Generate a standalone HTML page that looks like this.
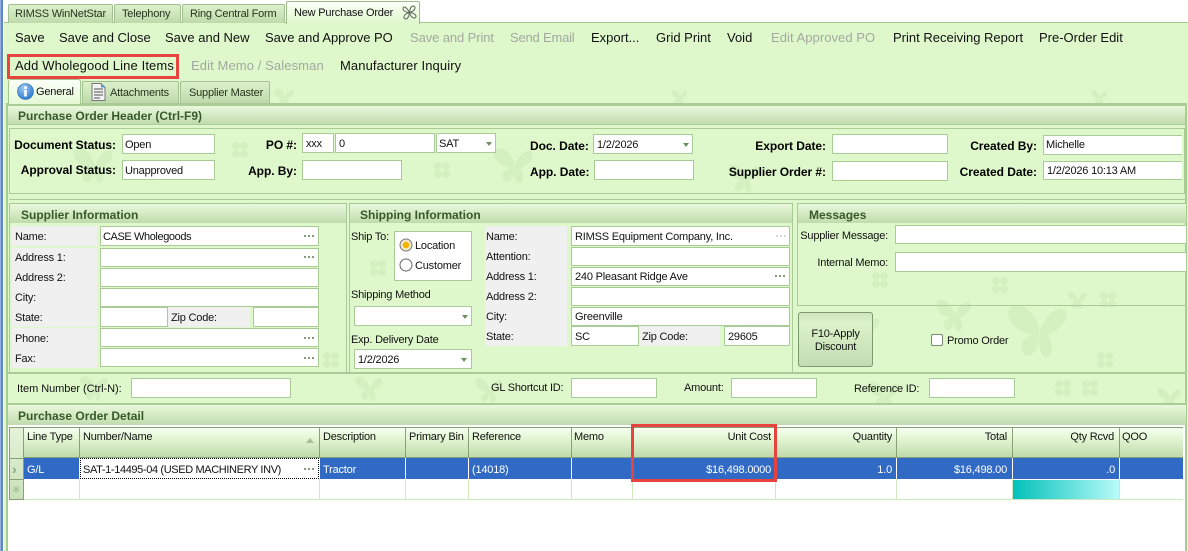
<!DOCTYPE html>
<html><head><meta charset="utf-8"><title>New Purchase Order</title>
<style>
html,body{margin:0;padding:0}
body{width:1188px;height:551px;position:relative;overflow:hidden;background:#fff;font-family:"Liberation Sans",sans-serif;font-size:11px;color:#000}
div,span{position:absolute;box-sizing:border-box}
.t{line-height:16px;height:16px;white-space:nowrap;letter-spacing:-.2px;color:#111;margin-top:1px}
.b{font-weight:bold;letter-spacing:-.05px;color:#000;font-size:12px}
.r{text-align:right}
.m{font-size:13px;letter-spacing:0;color:#111}
.d{color:#a3a8a0}
.i{background:#fff;border:1px solid #a9cb96}
.g{background:#f0f0f0}
.h{background:linear-gradient(#e9f9dc,#c0dbac);border:1px solid #aacd95}
.ht{font-weight:bold;color:#37592c;letter-spacing:0;font-size:12px}
.tab{background:linear-gradient(#dcf1cb,#bfd9ab);border:1px solid #a3c190;border-bottom:0;border-radius:2px 2px 0 0}
.dots{width:12px;height:2px;background:radial-gradient(circle at 1px 1px,#5d7751 1px,transparent 1px) 0 0/4px 2px}
.ar{width:0;height:0;border:3px solid transparent;border-top:4px solid #6f8f62;border-bottom:0}
.c{border-right:1px solid #87a078;height:31px;top:427px}
.v{border-right:1px solid #cde8bd;height:21px;top:479px}
.w{border-right:1px solid #fff;height:21px;top:458px}
.rt{top:461px;color:#fff}
svg{position:absolute;left:0;top:0}
</style></head><body>

<!-- outer chrome -->
<div style="left:0;top:0;width:4px;height:551px;background:linear-gradient(90deg,#b5c9ea 0,#5b83c9 35%,#5b83c9 70%,#fff 75%)"></div>
<div style="left:4px;top:22px;width:1184px;height:529px;background:#dff8cb;border-top:1px solid #a3c690"></div>

<!-- background motifs -->
<svg width="1188" height="551" viewBox="0 0 1188 551">
<defs>
<g id="bf"><path d="M0 0C-4-14-14-20-20-15C-24-9-17 1-5 3C-13 5-15 14-9 17C-3 18 0 9 0 0C3-9 11-16 16-14C21-10 15 0 5 3C9 8 9 16 5 18C0 19-2 8 0 0Z"/></g>
<g id="fl"><circle cx="-4" cy="-4" r="4"/><circle cx="4" cy="-4" r="4"/><circle cx="-4" cy="4" r="4"/><circle cx="4" cy="4" r="4"/></g>
</defs>
<g fill="#d4f0c0">
<use href="#bf" transform="translate(95,165)"/><use href="#bf" transform="translate(515,165)"/>
<use href="#bf" transform="translate(745,178) scale(.8)"/>
<use href="#bf" transform="translate(1040,330) scale(1.5)"/><use href="#bf" transform="translate(955,315) scale(.9)"/>
<use href="#bf" transform="translate(865,330) scale(.8)"/><use href="#bf" transform="translate(370,388) scale(.7)"/>
<use href="#bf" transform="translate(95,388) scale(.7)"/><use href="#bf" transform="translate(490,390) scale(.7)"/>
<use href="#bf" transform="translate(885,395) scale(.8)"/><use href="#bf" transform="translate(1170,398) scale(.6)"/>
<use href="#bf" transform="translate(285,97) scale(.5)"/><use href="#bf" transform="translate(680,97) scale(.4)"/>
<use href="#bf" transform="translate(1100,97) scale(.4)"/><use href="#bf" transform="translate(1078,300) scale(.5)"/>
<use href="#fl" transform="translate(240,150)"/><use href="#fl" transform="translate(442,170)"/>
<use href="#fl" transform="translate(378,268)"/><use href="#fl" transform="translate(331,360)"/>
<use href="#fl" transform="translate(1105,360)"/><use href="#fl" transform="translate(1090,388)"/>
<use href="#fl" transform="translate(1063,388)"/><use href="#fl" transform="translate(1108,300)"/>
<use href="#fl" transform="translate(1000,285)"/><use href="#fl" transform="translate(880,280)"/>
</g>
</svg>

<!-- top tabs -->
<div class="tab" style="left:8px;top:4px;width:105px;height:19px"></div><div class="t" style="left:15px;top:5px;color:#24361d">RIMSS WinNetStar</div>
<div class="tab" style="left:114px;top:4px;width:67px;height:19px"></div><div class="t" style="left:122px;top:5px;color:#24361d">Telephony</div>
<div class="tab" style="left:182px;top:4px;width:103px;height:19px"></div><div class="t" style="left:190px;top:5px;color:#24361d">Ring Central Form</div>
<div style="left:286px;top:1px;width:134px;height:23px;background:linear-gradient(#fbfff7,#dff8cb);border:1px solid #9dbb8a;border-bottom:0;border-radius:2px 2px 0 0"></div>
<div class="t" style="left:294px;top:4px">New Purchase Order</div>
<svg style="left:402px;top:5px" width="15" height="15" viewBox="0 0 15 15"><path d="M7.5 7.5C4 1 1 1 1 3.5S3 7 7.5 7.5C1 9 1 14 3.5 14S7 11 7.5 7.5C9 14 14 14 14 11.5S11 8 7.5 7.5C14 6 14 1 11.5 1S8 3 7.5 7.5Z" fill="#eef5e8" stroke="#5c6b58" stroke-width="1"/></svg>

<!-- toolbar -->
<div class="t m" style="left:15px;top:29px">Save</div>
<div class="t m" style="left:59px;top:29px">Save and Close</div>
<div class="t m" style="left:165px;top:29px">Save and New</div>
<div class="t m" style="left:265px;top:29px;letter-spacing:-.05px">Save and Approve PO</div>
<div class="t m d" style="left:410px;top:29px;letter-spacing:-.1px">Save and Print</div>
<div class="t m d" style="left:510px;top:29px;letter-spacing:-.2px">Send Email</div>
<div class="t m" style="left:591px;top:29px">Export...</div>
<div class="t m" style="left:656px;top:29px">Grid Print</div>
<div class="t m" style="left:727px;top:29px">Void</div>
<div class="t m d" style="left:771px;top:29px;letter-spacing:.05px">Edit Approved PO</div>
<div class="t m" style="left:893px;top:29px">Print Receiving Report</div>
<div class="t m" style="left:1039px;top:29px">Pre-Order Edit</div>
<div class="t m" style="left:15px;top:57px;letter-spacing:.12px">Add Wholegood Line Items</div>
<div class="t m d" style="left:191px;top:57px;letter-spacing:.1px">Edit Memo / Salesman</div>
<div class="t m" style="left:340px;top:57px;letter-spacing:.1px">Manufacturer Inquiry</div>
<div style="left:7px;top:54px;width:172px;height:25px;border:3px solid #e8433f"></div>

<!-- sub tabs -->
<div style="left:6px;top:103px;width:1181px;height:448px;border:2px solid #a9cb96;border-bottom:0;background:transparent"></div>
<div style="left:8px;top:79px;width:73px;height:25px;background:linear-gradient(#fbfff7,#e6f9d6);border:1px solid #a3c690;border-bottom:0;border-radius:3px 3px 0 0"></div>
<div class="tab" style="left:82px;top:81px;width:97px;height:22px"></div>
<div class="tab" style="left:180px;top:81px;width:90px;height:22px"></div>
<svg style="left:17px;top:83px" width="17" height="17" viewBox="0 0 17 17"><defs><radialGradient id="ib" cx=".4" cy=".3" r=".8"><stop offset="0" stop-color="#9ccbf5"/><stop offset="1" stop-color="#1f6fc9"/></radialGradient></defs><circle cx="8.5" cy="8.5" r="8" fill="url(#ib)" stroke="#2a6cb5" stroke-width=".6"/><rect x="7.2" y="7" width="2.6" height="6.5" fill="#fff"/><circle cx="8.5" cy="4.6" r="1.5" fill="#fff"/></svg>
<div class="t" style="left:36px;top:83px">General</div>
<svg style="left:91px;top:83px" width="15" height="18" viewBox="0 0 15 18"><path d="M1 .5H10L14 4.5V17.500H1Z" fill="#f2f2f2" stroke="#777" stroke-width="1"/><path d="M10 .5V4.500H14Z" fill="#4f9ad8"/><path d="M3 6H12M3 9H12M3 12H12M3 15H9" stroke="#888" stroke-width="1.400"/></svg>
<div class="t" style="left:110px;top:84px;color:#24361d">Attachments</div>
<div class="t" style="left:189px;top:84px;color:#24361d">Supplier Master</div>

<!-- PO header -->
<div class="h" style="left:7px;top:105px;width:1179px;height:20px"></div>
<div class="t ht" style="left:18px;top:107px">Purchase Order Header (Ctrl-F9)</div>
<div style="left:9px;top:128px;width:1176px;height:66px;border:1px solid #a9cb96"></div>
<div style="left:9px;top:199px;width:1176px;height:1px;background:#a9cb96"></div>

<div class="t b r" style="left:0;top:136px;width:116px">Document Status:</div>
<div class="i" style="left:122px;top:134px;width:93px;height:20px"></div><div class="t" style="left:125px;top:136px">Open</div>
<div class="t b r" style="left:0;top:161px;width:116px">Approval Status:</div>
<div class="i" style="left:122px;top:160px;width:93px;height:20px"></div><div class="t" style="left:125px;top:162px">Unapproved</div>
<div class="t b r" style="left:200px;top:136px;width:97px">PO #:</div>
<div class="i" style="left:302px;top:133px;width:32px;height:20px"></div><div class="t" style="left:306px;top:135px">xxx</div>
<div class="i" style="left:335px;top:133px;width:100px;height:20px"></div><div class="t" style="left:339px;top:135px">0</div>
<div class="i" style="left:436px;top:133px;width:60px;height:20px"></div><div class="t" style="left:439px;top:135px">SAT</div><div class="ar" style="left:486px;top:142px"></div>
<div class="t b r" style="left:200px;top:162px;width:97px">App. By:</div>
<div class="i" style="left:302px;top:160px;width:100px;height:20px"></div>
<div class="t b" style="left:530px;top:137px">Doc. Date:</div>
<div class="i" style="left:593px;top:134px;width:100px;height:20px"></div><div class="t" style="left:597px;top:136px">1/2/2026</div><div class="ar" style="left:683px;top:143px"></div>
<div class="t b" style="left:530px;top:163px">App. Date:</div>
<div class="i" style="left:594px;top:160px;width:100px;height:20px"></div>
<div class="t b r" style="left:700px;top:137px;width:126px">Export Date:</div>
<div class="i" style="left:832px;top:134px;width:116px;height:20px"></div>
<div class="t b r" style="left:700px;top:163px;width:126px">Supplier Order #:</div>
<div class="i" style="left:832px;top:161px;width:116px;height:20px"></div>
<div class="t b r" style="left:950px;top:137px;width:87px">Created By:</div>
<div class="i" style="left:1043px;top:135px;width:139px;height:20px;border-right:0"></div><div class="t" style="left:1046px;top:136px">Michelle</div>
<div class="t b r" style="left:950px;top:163px;width:87px">Created Date:</div>
<div class="i" style="left:1043px;top:161px;width:139px;height:19px;border-right:0"></div><div class="t" style="left:1047px;top:162px">1/2/2026 10:13 AM</div>

<!-- supplier -->
<div style="left:9px;top:203px;width:338px;height:170px;border:1px solid #a9cb96"></div>
<div class="h" style="left:10px;top:204px;width:336px;height:19px;border:0"></div>
<div class="t ht" style="left:21px;top:206px">Supplier Information</div>
<div class="g" style="left:12px;top:226px;width:85px;height:142px"></div>
<div class="g" style="left:168px;top:307px;width:82px;height:20px"></div>
<div style="left:12px;top:246px;width:85px;height:2px;background:#dff8cb"></div>
<div style="left:12px;top:327px;width:85px;height:1px;background:#dff8cb"></div>
<div class="t" style="left:15px;top:228px">Name:</div><div class="i" style="left:100px;top:226px;width:219px;height:20px"></div><div class="t" style="left:103px;top:228px;letter-spacing:-.4px">CASE Wholegoods</div><div class="dots" style="left:304px;top:235px"></div>
<div class="t" style="left:15px;top:249px">Address 1:</div><div class="i" style="left:100px;top:248px;width:219px;height:19px"></div><div class="dots" style="left:304px;top:256px"></div>
<div class="t" style="left:15px;top:269px">Address 2:</div><div class="i" style="left:100px;top:268px;width:219px;height:19px"></div>
<div class="t" style="left:15px;top:289px">City:</div><div class="i" style="left:100px;top:288px;width:219px;height:19px"></div>
<div class="t" style="left:15px;top:309px">State:</div><div class="i" style="left:100px;top:307px;width:68px;height:20px"></div>
<div class="t" style="left:171px;top:309px">Zip Code:</div><div class="i" style="left:253px;top:307px;width:66px;height:20px"></div>
<div class="t" style="left:15px;top:330px">Phone:</div><div class="i" style="left:100px;top:328px;width:219px;height:19px"></div><div class="dots" style="left:304px;top:337px"></div>
<div class="t" style="left:15px;top:350px">Fax:</div><div class="i" style="left:100px;top:348px;width:219px;height:19px"></div><div class="dots" style="left:304px;top:357px"></div>

<!-- shipping -->
<div style="left:349px;top:203px;width:444px;height:170px;border:1px solid #a9cb96"></div>
<div class="h" style="left:350px;top:204px;width:442px;height:19px;border:0"></div>
<div class="t ht" style="left:360px;top:206px">Shipping Information</div>
<div class="t" style="left:351px;top:228px">Ship To:</div>
<div class="i" style="left:394px;top:231px;width:78px;height:50px"></div>
<svg style="left:399px;top:238px" width="14" height="14" viewBox="0 0 14 14"><circle cx="7" cy="7" r="6" fill="#f4e8c8" stroke="#777"/><circle cx="7" cy="7" r="3.200" fill="#f5b300"/></svg>
<svg style="left:399px;top:258px" width="14" height="14" viewBox="0 0 14 14"><circle cx="7" cy="7" r="6" fill="#fff" stroke="#666"/></svg>
<div class="t" style="left:415px;top:237px">Location</div>
<div class="t" style="left:415px;top:257px">Customer</div>
<div class="t" style="left:351px;top:286px">Shipping Method</div>
<div class="i" style="left:354px;top:306px;width:118px;height:20px"></div><div class="ar" style="left:462px;top:315px"></div>
<div class="t" style="left:351px;top:331px">Exp. Delivery Date</div>
<div class="i" style="left:354px;top:349px;width:118px;height:20px"></div><div class="t" style="left:358px;top:351px">1/2/2026</div><div class="ar" style="left:461px;top:358px"></div>
<div class="g" style="left:485px;top:226px;width:82px;height:120px"></div>
<div class="g" style="left:639px;top:326px;width:81px;height:20px"></div>
<div class="t" style="left:486px;top:228px">Name:</div><div class="i" style="left:571px;top:226px;width:219px;height:20px"></div><div class="t" style="left:575px;top:228px">RIMSS Equipment Company, Inc.</div><div class="dots" style="left:776px;top:235px;opacity:.35"></div>
<div class="t" style="left:486px;top:248px">Attention:</div><div class="i" style="left:571px;top:247px;width:219px;height:19px"></div>
<div class="t" style="left:486px;top:268px">Address 1:</div><div class="i" style="left:571px;top:267px;width:219px;height:19px"></div><div class="t" style="left:575px;top:268px">240 Pleasant Ridge Ave</div><div class="dots" style="left:775px;top:275px"></div>
<div class="t" style="left:486px;top:288px">Address 2:</div><div class="i" style="left:571px;top:287px;width:219px;height:19px"></div>
<div class="t" style="left:486px;top:308px">City:</div><div class="i" style="left:571px;top:307px;width:219px;height:19px"></div><div class="t" style="left:575px;top:308px">Greenville</div>
<div class="t" style="left:486px;top:328px">State:</div><div class="i" style="left:571px;top:326px;width:68px;height:20px"></div><div class="t" style="left:575px;top:328px">SC</div>
<div class="t" style="left:642px;top:328px">Zip Code:</div><div class="i" style="left:724px;top:326px;width:66px;height:20px"></div><div class="t" style="left:728px;top:328px">29605</div>

<!-- messages -->
<div style="left:797px;top:203px;width:389px;height:103px;border:1px solid #a9cb96"></div>
<div class="h" style="left:798px;top:204px;width:388px;height:19px;border:0"></div>
<div class="t ht" style="left:809px;top:206px">Messages</div>
<div class="t r" style="left:790px;top:227px;width:98px">Supplier Message:</div>
<div class="i" style="left:895px;top:225px;width:291px;height:19px;border-right:0"></div>
<div class="t r" style="left:790px;top:254px;width:98px">Internal Memo:</div>
<div class="i" style="left:895px;top:252px;width:291px;height:20px;border-right:0"></div>
<div style="left:798px;top:312px;width:75px;height:55px;border:1px solid #7d9a6e;border-radius:3px;background:linear-gradient(#cfe6bd 0,#dcf2ca 20%,#c3dcb0 100%)"></div>
<div class="t" style="left:798px;top:325px;width:75px;text-align:center">F10-Apply</div>
<div class="t" style="left:798px;top:338px;width:75px;text-align:center">Discount</div>
<div style="left:931px;top:334px;width:12px;height:12px;background:#fff;border:1px solid #7b8a72;border-radius:2px"></div>
<div class="t" style="left:947px;top:332px">Promo Order</div>
<div style="left:8px;top:372px;width:1178px;height:2px;background:#a9cb96"></div>

<!-- shortcut row -->
<div class="t" style="left:17px;top:380px;letter-spacing:-.05px">Item Number (Ctrl-N):</div><div class="i" style="left:131px;top:378px;width:160px;height:20px"></div>
<div class="t" style="left:491px;top:379px">GL Shortcut ID:</div><div class="i" style="left:571px;top:378px;width:86px;height:20px"></div>
<div class="t" style="left:684px;top:379px">Amount:</div><div class="i" style="left:731px;top:378px;width:86px;height:20px"></div>
<div class="t" style="left:854px;top:380px">Reference ID:</div><div class="i" style="left:929px;top:378px;width:86px;height:20px"></div>

<!-- detail -->
<div style="left:8px;top:403px;width:1178px;height:2px;background:#a9cb96"></div>
<div class="h" style="left:8px;top:405px;width:1178px;height:20px;border:0"></div>
<div class="t ht" style="left:18px;top:407px">Purchase Order Detail</div>
<div style="left:8px;top:425px;width:1177px;height:126px;background:#fff"></div>

<div style="left:9px;top:427px;width:1174px;height:31px;background:linear-gradient(#f6fff0 0,#e6f8d8 30%,#bfdaab 100%);border-top:1px solid #87a078;border-bottom:1px solid #87a078"></div>
<div style="left:9px;top:427px;width:15px;height:73px;border:1px solid #87a078;background:linear-gradient(#e4f3d8,#c9e0b8)"></div>
<div style="left:10px;top:458px;width:14px;height:1px;background:#87a078"></div>
<div style="left:10px;top:479px;width:14px;height:1px;background:#87a078"></div>
<div class="t" style="left:12px;top:460px;color:#8aa57a;font-weight:bold;font-size:14px">&#8250;</div>
<div class="t" style="left:12px;top:482px;color:#9ab58a;font-size:10px">&#8251;</div>

<div style="left:24px;top:458px;width:1159px;height:21px;background:#316ac5"></div>
<div style="left:24px;top:479px;width:1159px;height:21px;border-bottom:1px solid #cde8bd"></div>
<div style="left:1012px;top:480px;width:107px;height:19px;background:linear-gradient(90deg,#00c0b8,#b8fbf9)"></div>

<div class="c" style="left:79px;width:1px"></div><div class="c" style="left:319px;width:1px"></div><div class="c" style="left:405px;width:1px"></div><div class="c" style="left:468px;width:1px"></div><div class="c" style="left:571px;width:1px"></div><div class="c" style="left:632px;width:1px"></div><div class="c" style="left:775px;width:1px"></div><div class="c" style="left:896px;width:1px"></div><div class="c" style="left:1012px;width:1px"></div><div class="c" style="left:1119px;width:1px"></div>
<div class="w" style="left:79px;width:1px"></div><div class="w" style="left:319px;width:1px"></div><div class="w" style="left:405px;width:1px"></div><div class="w" style="left:468px;width:1px"></div><div class="w" style="left:571px;width:1px"></div><div class="w" style="left:632px;width:1px"></div><div class="w" style="left:775px;width:1px"></div><div class="w" style="left:896px;width:1px"></div><div class="w" style="left:1012px;width:1px"></div><div class="w" style="left:1119px;width:1px"></div>
<div class="v" style="left:79px;width:1px"></div><div class="v" style="left:319px;width:1px"></div><div class="v" style="left:405px;width:1px"></div><div class="v" style="left:468px;width:1px"></div><div class="v" style="left:571px;width:1px"></div><div class="v" style="left:632px;width:1px"></div><div class="v" style="left:775px;width:1px"></div><div class="v" style="left:896px;width:1px"></div><div class="v" style="left:1012px;width:1px"></div><div class="v" style="left:1119px;width:1px"></div>

<div class="t" style="left:27px;top:428px">Line Type</div>
<div class="t" style="left:83px;top:428px">Number/Name</div>
<div style="left:306px;top:438px;width:0;height:0;border:4px solid transparent;border-bottom:5px solid #a9bd9c;border-top:0"></div>
<div class="t" style="left:323px;top:428px">Description</div>
<div class="t" style="left:409px;top:428px">Primary Bin</div>
<div class="t" style="left:472px;top:428px">Reference</div>
<div class="t" style="left:574px;top:428px">Memo</div>
<div class="t r" style="left:640px;top:428px;width:131px">Unit Cost</div>
<div class="t r" style="left:780px;top:428px;width:112px">Quantity</div>
<div class="t r" style="left:900px;top:428px;width:107px">Total</div>
<div class="t r" style="left:1020px;top:428px;width:94px">Qty Rcvd</div>
<div class="t" style="left:1122px;top:428px">QOO</div>

<div class="t rt" style="left:27px">G/L</div>
<div style="left:80px;top:458px;width:239px;height:21px;background:#fff;border:1px dotted #000"></div>
<div class="t" style="left:83px;top:461px;letter-spacing:-.37px">SAT-1-14495-04 (USED MACHINERY INV)</div>
<div class="dots" style="left:304px;top:468px"></div>
<div class="t rt" style="left:323px">Tractor</div>
<div class="t rt" style="left:472px">(14018)</div>
<div class="t rt r" style="left:640px;width:131px">$16,498.0000</div>
<div class="t rt r" style="left:780px;width:112px">1.0</div>
<div class="t rt r" style="left:900px;width:107px">$16,498.00</div>
<div class="t rt r" style="left:1020px;width:95px">.0</div>

<div style="left:631px;top:424px;width:146px;height:58px;border:3px solid #e8433f"></div>
</body></html>
